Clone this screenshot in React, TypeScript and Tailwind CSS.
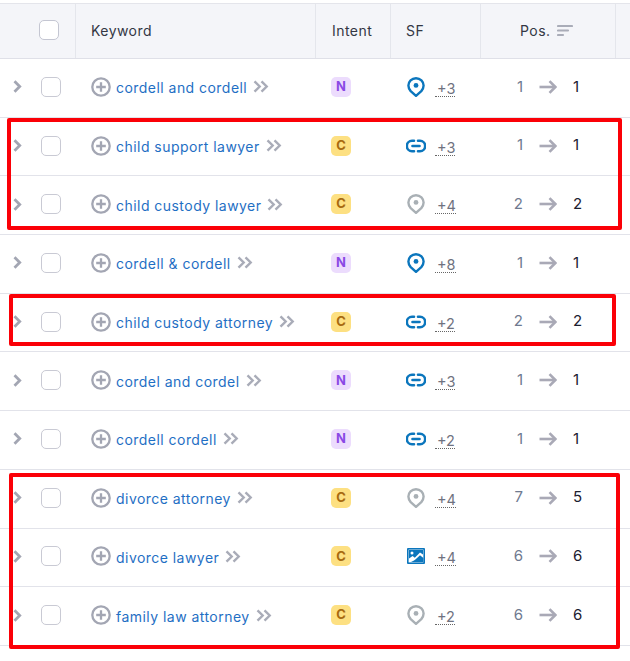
const rows = [
  { k: "cordell and cordell", i: "N", sf: "pin", n: "+3", a: "1", b: "1" },
  { k: "child support lawyer", i: "C", sf: "link", n: "+3", a: "1", b: "1" },
  { k: "child custody lawyer", i: "C", sf: "pinGray", n: "+4", a: "2", b: "2" },
  { k: "cordell & cordell", i: "N", sf: "pin", n: "+8", a: "1", b: "1" },
  { k: "child custody attorney", i: "C", sf: "link", n: "+2", a: "2", b: "2" },
  { k: "cordel and cordel", i: "N", sf: "link", n: "+3", a: "1", b: "1" },
  { k: "cordell cordell", i: "N", sf: "link", n: "+2", a: "1", b: "1" },
  { k: "divorce attorney", i: "C", sf: "pinGray", n: "+4", a: "7", b: "5" },
  { k: "divorce lawyer", i: "C", sf: "image", n: "+4", a: "6", b: "6" },
  { k: "family law attorney", i: "C", sf: "pinGray", n: "+2", a: "6", b: "6" },
];

function Pin({ color }: { color: string }) {
  return (
    <svg width="18" height="20" viewBox="0 0 18 20" fill="none">
      <path d="M9 1.200C4.700 1.200 1.400 4.500 1.400 8.600c0 2.200 1 4 2.300 5.500L9 18.900l5.300-4.800c1.300-1.500 2.300-3.300 2.300-5.500 0-4.100-3.300-7.400-7.600-7.400Z" stroke={color} strokeWidth="2.400" strokeLinejoin="round" />
      <circle cx="9" cy="8.400" r="2.400" fill={color} />
    </svg>
  );
}

function LinkIcon() {
  return (
    <svg className="-ml-[1px]" width="20" height="14" viewBox="0 0 20 14" fill="none" stroke="#0b76bd" strokeWidth="2.600" strokeLinecap="round">
      <path d="M8 1.800H6a5.200 5.200 0 0 0 0 10.400h2" />
      <path d="M12 1.800h2a5.200 5.200 0 0 1 0 10.400h-2" />
      <path d="M6.500 7h7" />
    </svg>
  );
}

function ImageIcon() {
  return (
    <svg width="18" height="16" viewBox="0 0 18 16">
      <rect width="18" height="16" rx="1" fill="#0b76bd" />
      <rect x="1.600" y="1.600" width="14.800" height="12.800" fill="#fff" />
      <path d="M2 2h14v4.400L13 4.500 7.800 9.700 5.600 8 2 10.600Z" fill="#0b76bd" />
      <path d="M4 14h12.400v-4l-3.400-2.800-4.600 4.300-1.400 1Z" fill="#0b76bd" />
      <circle cx="5" cy="5" r="1.500" fill="#fff" />
    </svg>
  );
}

function SfIcon({ t }: { t: string }) {
  if (t === "pin") return <Pin color="#0b76bd" />;
  if (t === "pinGray") return <Pin color="#a9b0b5" />;
  if (t === "link") return <LinkIcon />;
  return <ImageIcon />;
}

function Arrow() {
  return (
    <svg className="block" width="18" height="14" viewBox="0 0 18 14" fill="none" stroke="#a9a9b6" strokeWidth="2.600">
      <path d="M0.500 7H16" />
      <path d="M10.500 1.200 16.300 7l-5.800 5.800" />
    </svg>
  );
}

function Box({ className }: { className: string }) {
  return <div className={`absolute border-[4px] border-[#fb0007] rounded-[2px] ${className}`} />;
}

export default function App() {
  return (
    <div className="relative w-[630px] h-[661px] bg-white overflow-hidden font-['Inter',sans-serif] text-[14px] text-[#333a45]">
      <div className="h-[4px] border-b border-[#e4e5eb]" />
      <div className="grid grid-cols-[76px_240px_75px_90px_135px_14px] h-[55px] bg-[#f4f5f9] border-b border-[#dfe0e8] text-[#333744] tracking-[0.45px]">
        <div className="border-r border-[#e4e6ec] pl-[39px] pb-[2px] flex items-center">
          <div className="w-[20px] h-[20px] rounded-[5px] border border-[#c4c6d2] bg-white" />
        </div>
        <div className="border-r border-[#e4e6ec] pl-[15px] pb-[2px] flex items-center">Keyword</div>
        <div className="border-r border-[#e4e6ec] pl-[16px] pb-[2px] flex items-center">Intent</div>
        <div className="border-r border-[#e4e6ec] pl-[15px] pb-[2px] flex items-center">SF</div>
        <div className="border-r border-[#e4e6ec] pl-[39px] pb-[2px] flex items-center gap-[7px]">
          Pos.
          <svg width="16" height="13" viewBox="0 0 16 13" fill="none" stroke="#a9acb8" strokeWidth="2.200" strokeLinecap="round">
            <path d="M1 2h14M1 6.500h10M1 11h5" />
          </svg>
        </div>
        <div />
      </div>
      {rows.map((r) => (
        <div key={r.k} className="grid grid-cols-[76px_240px_75px_90px_149px] h-[58.7px] pb-[2px] border-b border-[#e2e3ea] items-center">
          <div className="flex items-center pl-[13px]">
            <svg width="9" height="13" viewBox="0 0 9 13" fill="none" stroke="#a3a6b3" strokeWidth="2.800">
              <path d="M1.500 1.300 6.700 6.500 1.500 11.700" />
            </svg>
            <div className="ml-[19px] w-[20px] h-[20px] rounded-[5px] border border-[#c9cad4] bg-white" />
          </div>
          <div className="flex items-center pl-[15px] whitespace-nowrap">
            <svg width="20" height="20" viewBox="0 0 20 20" fill="none" stroke="#a3a6b3" strokeWidth="2.300">
              <circle cx="10" cy="10" r="8.700" />
              <path d="M10 5.200v9.600M5.200 10h9.600" />
            </svg>
            <span className="ml-[5px] text-[#1f6fc4] tracking-[0.46px] relative top-[1px]">{r.k}</span>
            <svg className="ml-[6px]" width="16" height="13" viewBox="0 0 16 13" fill="none" stroke="#a9acb8" strokeWidth="2.400">
              <path d="M1.500 1.300 6.700 6.500 1.500 11.700M8.500 1.300 13.700 6.500 8.500 11.700" />
            </svg>
          </div>
          <div className="pl-[15px]">
            {r.i === "N" ? (
              <div className="w-[20px] h-[20px] rounded-[5px] bg-[#ecdcfd] text-[#8a49e5] text-[13px] font-bold flex items-center justify-center">N</div>
            ) : (
              <div className="w-[20px] h-[20px] rounded-[5px] bg-[#fde082] text-[#a86a10] text-[13px] font-bold flex items-center justify-center">C</div>
            )}
          </div>
          <div className="flex items-center">
            <div className="w-[44px] pl-[16px] flex items-center justify-start h-[22px]">
              <SfIcon t={r.sf} />
            </div>
            <span className="text-[14.5px] pl-[2px] text-[#6f7280] border-b border-dotted border-[#666] leading-[15px] relative top-[2px]">{r.n}</span>
          </div>
          <div className="flex items-center">
            <span className="w-[42px] text-right text-[15px] text-[#6f7a90]">{r.a}</span>
            <span className="ml-[16px]"><Arrow /></span>
            <span className="ml-[16px] text-[15px] text-[#1c2030]">{r.b}</span>
          </div>
        </div>
      ))}
      <Box className="left-[7px] top-[118px] w-[615px] h-[112px]" />
      <Box className="left-[9px] top-[294px] w-[607px] h-[52px]" />
      <Box className="left-[9px] top-[473px] w-[611px] h-[176px]" />
    </div>
  );
}
